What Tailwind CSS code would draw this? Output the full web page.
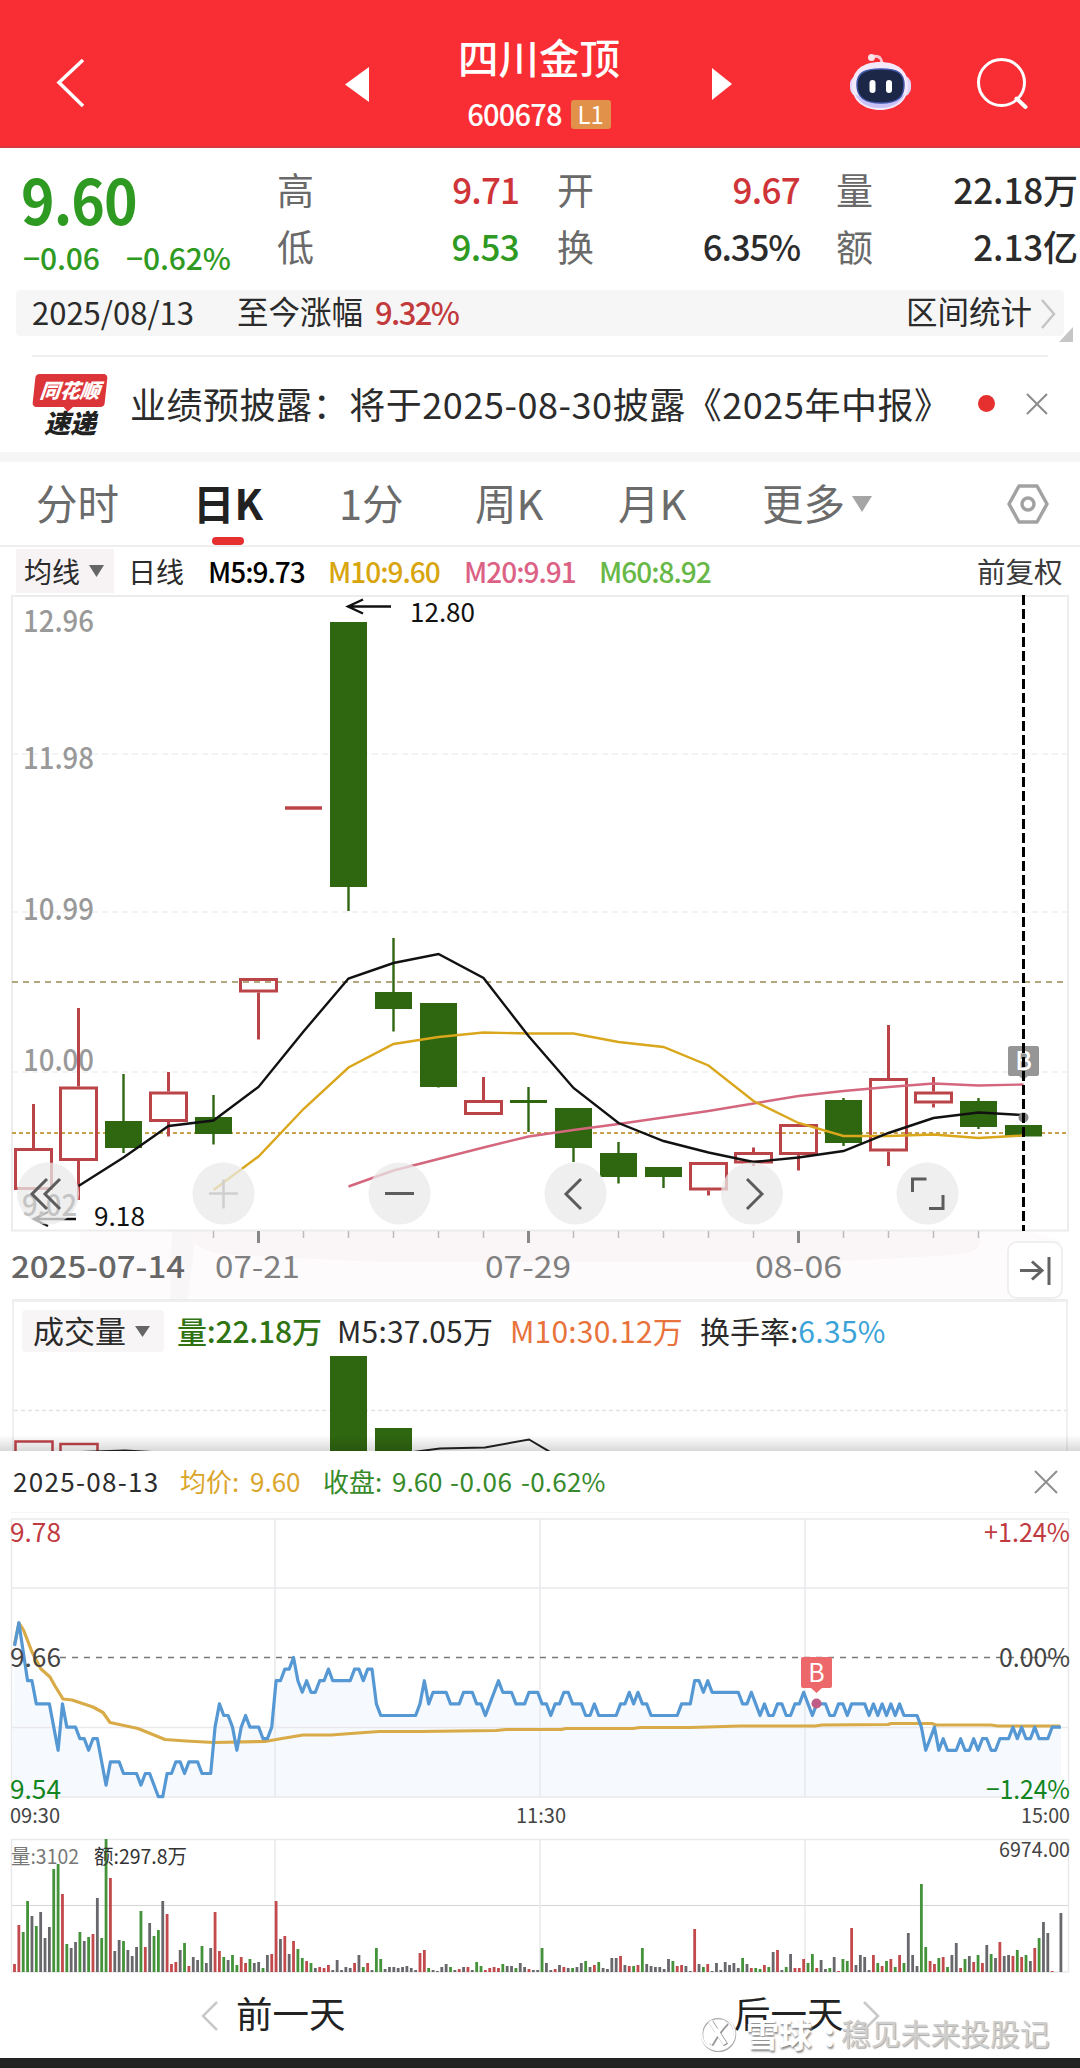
<!DOCTYPE html>
<html lang="zh-CN">
<head>
    <meta charset="UTF-8">
    <meta name="viewport" content="width=device-width, initial-scale=1.0">
    <title>四川金顶 600678</title>
    <script src="https://cdn.jsdelivr.net/npm/@tailwindcss/browser@4"></script>
</head>
<body class="relative w-[1080px] h-[2068px] overflow-hidden bg-white text-[#2b2b2b] font-['Noto_Sans_CJK_SC',sans-serif] leading-none whitespace-nowrap">

    <!-- Header -->
    <header class="h-[148px] bg-[#f92e34] text-white flex border-b-2 border-[#d8373b]">
        <svg class="w-[340px] h-[146px] shrink-0" viewBox="0 0 340 146" fill="none" stroke="#fff" stroke-width="3.5">
            <path d="M83 60 59 82.500 83 106"/>
        </svg>
        <svg class="w-[60px] h-[146px] shrink-0" viewBox="340 0 60 146" fill="#fff"><path d="M369 67v35l-24-17.500z"/></svg>
        <div class="w-[278px] pt-[37px] flex flex-col items-center">
            <h1 class="text-[40.5px] font-medium h-[42px]">四川金顶</h1>
            <div class="mt-[20px] flex items-center gap-[9px]">
                <span class="text-[29px] font-medium tracking-[-0.8px] leading-[32px] -mt-[2px]">600678</span>
                <span class="w-[40px] h-[29px] rounded-[3px] bg-[#e2914a] text-center text-[24px] leading-[27px]">L1</span>
            </div>
        </div>
        <svg class="w-[402px] h-[146px] shrink-0" viewBox="678 0 402 146" fill="none">
            <path d="M712 68v32l20-16z" fill="#fff"/>
            <!-- assistant robot -->
            <path d="M871 57q7-2 9.500 1.500 1.500 2 1 5" stroke="#fbc6d2" stroke-width="2.800" stroke-linecap="round"/>
            <circle cx="871.500" cy="57.500" r="3.500" fill="#ffe3ea"/>
            <rect x="850" y="75" width="61" height="22" rx="9" fill="#dfd6fa"/>
            <path d="M880 62c17 0 28 8 28 24 0 15-12 24-28 24s-28-9-28-24c0-16 11-24 28-24z" fill="#f3e9fb"/>
            <path d="M855 94q25 16 50 0-7 14-25 14t-25-14z" fill="#c9c2f6"/>
            <path d="M881 69c17 0 23 4 23 16s-6 18-23 18-24-6-24-18 7-16 24-16z" fill="#1c2748" stroke="#4056a8" stroke-width="1.500"/>
            <rect x="869.500" y="80" width="6" height="13" rx="3" fill="#fff"/>
            <rect x="886" y="80" width="6" height="13" rx="3" fill="#fff"/>
            <circle cx="1001.500" cy="82.500" r="23" stroke="#fff" stroke-width="3"/>
            <path d="m1016.500 98.500 9 8.500" stroke="#fff" stroke-width="4" stroke-linecap="round"/>
        </svg>
    </header>

    <!-- Quote -->
    <section class="h-[142px] flex text-[35px]">
        <div class="w-[278px] pl-[21px] text-[#2f9a22]">
            <div class="w-[130px] mt-[25px] h-[50px] flex items-center"><span class="text-[62px] font-bold tracking-[-1px] origin-left scale-x-[.92]">9.60</span></div>
            <div class="mt-[19px] ml-[2px] flex text-[30px] font-medium tracking-[-0.1px]"><span class="w-[103px]">−0.06</span><span>−0.62%</span></div>
        </div>
        <div class="grid grid-cols-[242px_281px_279px] gap-x-[38px] w-[802px] pt-[13px] auto-rows-[57px] items-center font-medium">
            <div class="w-[242px] -ml-px flex justify-between"><span class="text-[37px] font-normal text-[#6a6a6a]">高</span><span class="text-[#cf3438] tracking-[-0.9px]">9.71</span></div>
            <div class="w-[243px] -ml-px flex justify-between"><span class="text-[37px] font-normal text-[#6a6a6a]">开</span><span class="text-[#cf3438] tracking-[-0.7px]">9.67</span></div>
            <div class="w-[242px] -ml-[41px] flex justify-between"><span class="text-[37px] font-normal text-[#6a6a6a]">量</span><span class="tracking-[-0.1px]">22.18万</span></div>
            <div class="w-[242px] -ml-px flex justify-between"><span class="text-[37px] font-normal text-[#6a6a6a]">低</span><span class="text-[#2f9a22] tracking-[-0.7px]">9.53</span></div>
            <div class="w-[243px] -ml-px flex justify-between"><span class="text-[37px] font-normal text-[#6a6a6a]">换</span><span class="tracking-[-1.200px]">6.35%</span></div>
            <div class="w-[242px] -ml-[41px] flex justify-between"><span class="text-[37px] font-normal text-[#6a6a6a]">额</span><span class="tracking-[-0.1px]">2.13亿</span></div>
        </div>
    </section>

    <!-- Range summary -->
    <section class="h-[65px] flex items-start">
        <div class="ml-[16px] w-[1048px] h-[46px] bg-[#f6f6f6] rounded flex items-center text-[31.5px] pl-[16px] pb-[4px]">
            <span class="w-[205px] text-[31px]">2025/08/13</span>
            <span class="w-[138px]">至今涨幅</span>
            <span class="text-[#c23a3c] text-[31px] font-medium tracking-[-1.600px]">9.32%</span>
            <span class="ml-auto">区间统计</span>
            <svg class="w-[32px] h-[46px] mt-[4px]" viewBox="0 0 32 46" fill="none"><path d="m10 10 12 14-12 14" stroke="#c4c4c4" stroke-width="2.500"/></svg>
        </div>
        <svg class="w-[16px] h-[54px] -ml-[6px]" viewBox="0 0 16 54"><path d="M15 37v15H1z" fill="#c6c6c6"/></svg>
    </section>

    <!-- News -->
    <section class="mx-[32px] h-[97px] border-t-2 border-[#f0f0f0] flex items-center">
        <div class="w-[76px] h-[63px] italic font-black text-center pt-px">
            <div class="relative w-[72px] h-[33px] ml-[2px] rounded bg-[#dc3539] text-white text-[20px] leading-[31px] -skew-x-6">同花顺<i class="absolute left-[32px] -bottom-[3px] w-[8px] h-[8px] rotate-45 bg-[#dc3539]"></i></div>
            <div class="text-[26px] leading-[30px] text-[#222]">速递</div>
        </div>
        <div class="ml-[22px] w-[849px] -mt-[4px] text-[36px] tracking-[0.550px]">业绩预披露：将于2025-08-30披露《2025年中报》</div>
        <div class="w-[17px] h-[17px] -mt-[3px] rounded-full bg-[#e5302f]"></div>
        <svg class="ml-[31px] -mt-[2px] w-[22px] h-[22px]" viewBox="0 0 22 22" stroke="#8c8c8c" stroke-width="2"><path d="m1 1 20 20M21 1 1 21"/></svg>
    </section>
    <div class="h-[10px] bg-[#f6f6f6]"></div>

    <!-- Period tabs -->
    <nav class="h-[85px] border-b-2 border-[#eee] flex items-center pl-[36px] text-[41.5px] text-[#6b6b6b]">
        <span class="w-[157px] -mt-[2px]">分时</span>
        <span class="w-[146px] h-full relative text-[#222] font-bold leading-[80px]">日K<i class="absolute left-[19px] bottom-0 w-[32px] h-[8px] rounded bg-[#e5302f]"></i></span>
        <span class="w-[136px] -mt-[2px]">1分</span>
        <span class="w-[143px] -mt-[2px]">周K</span>
        <span class="w-[144px] -mt-[2px]">月K</span>
        <span class="w-[83px] -mt-[2px]">更多</span>
        <svg class="ml-[7px] w-[20px] h-[16px]" viewBox="0 0 20 16" fill="#a5a5a5"><path d="M0 0h20L10 16z"/></svg>
        <svg class="ml-[134px] w-[44px] h-[42px]" viewBox="0 0 44 42" fill="none" stroke="#a2a2a2" stroke-width="3.500" stroke-linejoin="round"><path d="M13 3h18l10 18-10 18H13L3 21z"/><circle cx="22" cy="21" r="6"/></svg>
    </nav>

    <!-- Moving averages legend -->
    <div class="h-[48px] flex items-center pl-[16px] text-[28px] font-medium">
        <div class="w-[98px] h-[44px] bg-[#f7f3f5] flex items-center pl-[8px] font-normal">均线
            <svg class="ml-[9px] w-[15px] h-[12px]" viewBox="0 0 15 12" fill="#666"><path d="M0 0h15L7.500 12z"/></svg>
        </div>
        <span class="ml-[14px] w-[80px] font-normal">日线</span>
        <span class="w-[120px] text-black tracking-[-1px]">M5:9.73</span>
        <span class="w-[136px] text-[#d8a50e] tracking-[-1px]">M10:9.60</span>
        <span class="w-[135px] text-[#dc6285] tracking-[-1px]">M20:9.91</span>
        <span class="w-[378px] text-[#68b848] tracking-[-1px]">M60:8.92</span>
        <span class="text-[28.5px] font-normal text-[#3a3a3a]">前复权</span>
    </div>

    <!-- Daily candlestick chart -->
    <svg id="daily" class="block w-[1080px] h-[705px]" viewBox="0 595 1080 705"></svg>

    <!-- Volume -->
    <section class="h-[151px] mx-[12px] border-x-2 border-t-2 border-[#efefef] relative">
        <div class="absolute left-[8px] top-[6px] flex items-center text-[30px]">
            <div class="w-[142px] h-[42px] mt-[2px] bg-[#f7f5f6] rounded flex items-center pl-[11px] pb-[3px] text-[31px]">成交量
                <svg class="ml-[9px] mt-[3px] w-[15px] h-[11px]" viewBox="0 0 15 11" fill="#666"><path d="M0 0h15L7.500 11z"/></svg>
            </div>
            <span class="ml-[13px] w-[160px] font-medium tracking-[-0.2px] text-[#2f7312]">量:22.18万</span>
            <span class="w-[173px] tracking-[0.2px]">M5:37.05万</span>
            <span class="w-[190px] tracking-[0.2px] text-[#e8733c]">M10:30.12万</span>
            <span>换手率:</span><span class="text-[#3ba3d8] tracking-[0.3px]">6.35%</span>
        </div>
        <svg class="absolute left-0 top-[50px] w-[1052px] h-[99px]" viewBox="14 1352 1052 99" fill="none">
            <path d="M14 1410.500h1052" stroke="#e4e4e4" stroke-width="1.500" stroke-dasharray="4 3"/>
            <path d="M330 1356h37v95h-37zM375 1428h37v23h-37z" fill="#2f6610"/>
            <path d="M15.500 1452v-10.500h37V1452M60.500 1452v-8h37V1452" stroke="#c0444a" stroke-width="2.500"/>
            <path d="m80 1452 45-1.500 27 1.500M413 1452l27-3.500 45-1 44-8 22 13" stroke="#222" stroke-width="2"/>
        </svg>
        <div class="absolute -left-[14px] bottom-0 w-[1080px] h-[16px] bg-linear-to-b from-black/0 to-black/15"></div>
    </section>

    <!-- Intraday popup -->
    <section class="h-[607px] bg-white">
        <div class="h-[61px] flex items-center pl-[13px] text-[26px]">
            <span class="w-[167px] -mt-[2px] tracking-[1.300px]">2025-08-13</span>
            <span class="w-[70px] -mt-[2px] text-[#dba52a]">均价:</span>
            <span class="w-[73px] -mt-[2px] text-[#dba52a]">9.60</span>
            <span class="w-[69px] -mt-[2px] text-[#378a2a]">收盘:</span>
            <span class="w-[58px] -mt-[2px] text-[#378a2a]">9.60</span>
            <span class="w-[71px] -mt-[2px] text-[#378a2a] tracking-[0.6px]">-0.06</span>
            <span class="text-[#378a2a] -mt-[2px] tracking-[0.2px]">-0.62%</span>
            <svg class="ml-auto mr-[22px] w-[24px] h-[24px]" viewBox="0 0 24 24" stroke="#8f8f8f" stroke-width="2"><path d="m1 1 22 22M23 1 1 23"/></svg>
        </div>
        <svg id="minute" class="block w-[1080px] h-[463px]" viewBox="0 1512 1080 463"></svg>
        <div class="h-[83px] flex items-center text-[36.5px] text-[#222]">
            <svg class="ml-[200px] -mt-[2px] w-[20px] h-[32px]" viewBox="0 0 20 32" fill="none" stroke="#c9c9c9" stroke-width="2.500"><path d="M17 2 3 16l14 14"/></svg>
            <span class="ml-[16px] w-[498px] -mt-[7px]">前一天</span>
            <span class="-mt-[7px]">后一天</span>
            <svg class="ml-[17px] -mt-[2px] w-[20px] h-[32px]" viewBox="0 0 20 32" fill="none" stroke="#c9c9c9" stroke-width="2.500"><path d="m3 2 14 14L3 30"/></svg>
        </div>
    </section>
    <div class="h-[10px] bg-[#222]"></div>

    <!-- Watermark -->
    <div class="absolute left-[700px] top-[2013px] h-[40px] flex items-center">
        <svg class="w-[38px] h-[38px]" viewBox="0 0 38 38" fill="none">
            <circle cx="18.500" cy="20.500" r="16.500" stroke="#aaa" stroke-width="2.500"/>
            <circle cx="18" cy="19.500" r="16.500" stroke="#fff" stroke-width="2"/>
            <path d="m11 8 15 23M27 9q-8 8-16 22" stroke="#999" stroke-width="5"/>
            <path d="m10 7 15 23M26 8q-8 8-16 22" stroke="#fff" stroke-width="4"/>
        </svg>
        <span class="ml-[8px] w-[72px] text-[33px] font-bold text-white text-shadow-[1px_2px_2px_#888]">雪球</span>
        <span class="w-[23px] text-[33px] font-bold text-white text-center text-shadow-[1px_2px_2px_#888]">:</span>
        <span class="text-[29.8px] text-[#cfcfcf] text-shadow-[1px_1px_1px_#aaa]">稳见未来投股记</span>
    </div>

    <script>
    const GREEN = '#2f6610', RED = '#bb4449';

    function label(x, y, w, size, color, text, extra = '') {
        return `<text x="${x}" y="${y}" textLength="${w}" lengthAdjust="spacingAndGlyphs" font-size="${size}" fill="${color}" ${extra}>${text}</text>`;
    }

    function line(x1, y1, x2, y2, color, width, dash = '') {
        return `<path d="M${x1} ${y1}L${x2} ${y2}" stroke="${color}" stroke-width="${width}" stroke-dasharray="${dash}"/>`;
    }

    // ---- daily chart: [color, high, bodyTop, bodyBottom, low]
    const candles = [
        ['r', 1104, 1148, 1190, 1190], ['r', 1008, 1086.5, 1161, 1200], ['g', 1074, 1121, 1148, 1153],
        ['r', 1072, 1091.5, 1122, 1136.5], ['g', 1095, 1117, 1134, 1144.5], ['r', 978, 978, 992.5, 1039.5],
        ['-', 808, 808, 808, 808], ['g', 622, 622, 887, 911], ['g', 938, 992, 1009, 1031.5],
        ['g', 1003, 1003, 1087, 1087.5], ['r', 1077, 1100, 1115, 1115], ['g', 1087, 1100, 1103, 1132],
        ['g', 1108, 1108, 1148, 1162], ['g', 1142, 1153, 1177, 1183.5], ['g', 1167, 1167, 1177, 1188],
        ['r', 1162, 1162, 1190.5, 1195.5], ['r', 1147.5, 1152, 1163.5, 1166], ['r', 1124, 1124, 1155, 1170.5],
        ['g', 1098, 1100, 1143, 1146], ['r', 1025, 1078, 1151.5, 1166], ['r', 1077, 1091.5, 1103.5, 1107.5],
        ['g', 1098, 1101, 1127, 1129], ['g', 1125, 1125, 1136.5, 1136.5]
    ];
    const ma5 = [1186, 1157.5, 1126, 1120.5, 1087, 1031.5, 978.5, 963, 954, 978, 1036, 1088, 1123, 1141, 1152.5, 1162, 1157.5, 1151, 1133, 1118, 1112.5, 1115];
    const ma10 = [1190, 1156.5, 1109, 1067.5, 1044, 1037, 1032.5, 1033.5, 1033.5, 1042, 1047, 1065.5, 1101, 1123, 1136, 1136, 1134.5, 1138, 1135.5];
    const ma20 = [1186.5, 1170.5, 1159, 1147.5, 1136.5, 1130, 1124, 1117.5, 1111, 1103.5, 1096, 1091, 1087, 1083.5, 1085.5, 1084.5];
    const dayX = i => 33.5 + 45 * i;

    function maLine(values, start, color) {
        const pts = values.map((y, i) => dayX(i + start) + ',' + y).join(' ');
        return `<polyline points="${pts}" fill="none" stroke="${color}" stroke-width="2.400"/>`;
    }

    function drawDaily() {
        let s = '<path d="M80 1231h950l30 10v57H80z" fill="#fefbfc"/>';
        s += '<path d="M190 1231h790v10q0 12-25 14l-130 7H380l-150-7q-40-4-40-24z" fill="#faf6f7"/><path d="M172 1231h24l-8 69h-18z" fill="#f9f6f7"/>';
        s += '<rect x="12" y="596" width="1056" height="634.500" fill="none" stroke="#ececec" stroke-width="2"/>';
        [754, 912, 1072].forEach(y => s += line(12, y, 1068, y, '#efefef', 1.5, '6 4'));
        s += line(12, 1299.5, 1068, 1299.5, '#ececec', 1);
        s += line(12, 982, 1068, 982, '#b3a77e', 1.8, '6 5');
        s += line(12, 1133, 1068, 1133, '#c9a04c', 1.8, '4 3');
        [['12.96', 632], ['11.98', 769], ['10.99', 920], ['10.00', 1071]].forEach(([t, y]) => s += label(23, y, 71, 30, '#999', t, 'font-weight="500"'));

        candles.forEach(([c, high, top, bottom, low], i) => {
            const x = dayX(i), l = x - 18.5;
            if (c === '-') {
                s += line(l, top, l + 37, top, RED, 3.5);
            } else if (c === 'g') {
                s += line(x, high, x, low, GREEN, 2.4) + `<rect x="${l}" y="${top}" width="37" height="${bottom - top}" fill="${GREEN}"/>`;
            } else {
                s += line(x, high, x, top, RED, 3) + line(x, bottom, x, low, RED, 3);
                s += `<rect x="${l + 0.5}" y="${top + 1.5}" width="36" height="${bottom - top - 3}" fill="none" stroke="${RED}" stroke-width="3"/>`;
            }
        });
        s += maLine(ma20, 7, '#d4667e') + maLine(ma10, 4, '#d9a61c') + maLine(ma5, 1, '#111');

        s += '<path d="M391 606.500h-43m15-7-15 7 15 7M76 1219H34m14-7-14 7 14 7" fill="none" stroke="#111" stroke-width="2.400"/>';
        s += label(410, 622, 65, 26, '#111', '12.80') + label(94, 1226, 51, 26, '#111', '9.18');

        // buy marker and crosshair
        s += '<path d="M1011 1046h26q2 0 2 2v26q0 2-2 2h-9l-4.500 4-4.500-4h-8q-3 0-3-2v-26q0-2 3-2z" fill="#969696"/>';
        s += '<text x="1023.500" y="1070" font-size="25" font-weight="500" fill="#fff" text-anchor="middle">B</text>';
        s += '<circle cx="1023.500" cy="1117.500" r="5" fill="#888"/>';
        s += line(1023.5, 595, 1023.5, 1231, '#000', 3, '10 4');

        // floating buttons
        [48, 223.5, 399.5, 575.5, 752, 927.5].forEach(x => s += `<circle cx="${x}" cy="1193.500" r="31" fill="#e9e9e9" opacity=".75"/>`);
        s += label(22, 1216, 55, 30, '#c4c4c4', '9.02', 'font-weight="500"');
        s += '<g fill="none" stroke="#5c5c5c" stroke-width="3"><path d="m47 1179-15 15 15 15m13-30-15 15 15 15M385 1193.500h29M581 1179l-15 15 15 15M747 1179l15 15-15 15M912.500 1192v-13h14M943 1195v13.500h-14"/></g>';
        s += '<path d="M209 1193.500h29m-14.500-14v29" stroke="#cfcfcf" stroke-width="2.500"/>';

        // date axis
        for (let i = 4; i < 22; i++) {
            const big = i === 5 || i === 11 || i === 17;
            s += line(dayX(i), 1231, dayX(i), big ? 1243 : 1238, big ? '#888' : '#bbb', big ? 3 : 1.5);
        }
        s += label(11, 1278, 174, 30, '#666', '2025-07-14', 'font-weight="500"');
        s += label(215, 1278, 85, 30, '#808080', '07-21') + label(485, 1278, 86, 30, '#808080', '07-29') + label(755, 1278, 87, 30, '#808080', '08-06');
        s += '<rect x="1008" y="1242" width="54" height="56" rx="9" fill="#fff" stroke="#f1eef0" stroke-width="2"/>';
        s += '<path d="M1020 1270.500h22m-10-9 10 9-10 9M1049 1257v28" fill="none" stroke="#636363" stroke-width="3"/>';
        document.getElementById('daily').innerHTML = s;
    }

    // ---- intraday: minute, ticks below previous close
    const price = [0,-1, 1,-3, 3,2, 4,2, 5,4, 8,4, 10,8, 11,4, 12,6, 14,6, 15,7, 16,7, 17,8, 18,7, 19,7, 21,11, 22,9, 24,9, 25,10, 28,10, 29,11, 30,10, 31,10,
        33,12, 34,12, 35,10, 36,10, 37,9, 38,9, 39,10, 40,9, 42,9, 43,10, 45,10, 46,6, 47,4, 48,5, 49,5, 50,6, 51,8, 52,6, 53,5, 54,6, 56,6, 57,7, 58,7, 59,6,
        60,2, 61,2, 62,1, 63,1, 64,0, 65,2, 66,3, 67,2, 68,3, 69,3, 70,2, 71,2, 72,1, 73,2, 77,2, 78,1, 79,1, 80,2, 81,1, 82,1, 83,4, 84,5, 92,5, 93,4, 94,2,
        95,4, 96,3, 99,3, 100,4, 102,4, 103,3, 105,3, 106,4, 107,4, 108,5, 109,4, 111,2, 112,3, 114,3, 115,4, 117,4, 118,3, 120,3, 121,4, 122,4, 123,5, 124,4,
        125,4, 126,3, 127,3, 128,4, 130,4, 131,5, 132,5, 133,4, 134,5, 138,5, 139,4, 140,4, 141,3, 142,4, 143,3, 144,4, 145,4, 146,5, 152,5, 153,4, 155,4,
        156,2, 157,2, 158,3, 159,2, 160,3, 166,3, 167,4, 168,4, 169,3, 170,4, 171,5, 172,4, 173,5, 174,5, 175,4, 176,4, 177,5, 178,5, 179,4, 180,4, 181,3,
        182,4, 183,5, 184,4, 186,4, 187,5, 188,5, 189,4, 190,4, 191,5, 192,4, 195,4, 196,5, 197,4, 198,5, 199,4, 200,5, 201,4, 202,5, 203,4, 204,5, 207,5,
        208,6, 209,8, 210,7, 211,6, 212,8, 213,7, 214,8, 216,8, 217,7, 218,8, 219,8, 220,7, 221,8, 222,7, 223,7, 224,8, 225,8, 226,7, 228,7, 229,6, 230,7,
        231,6, 232,7, 233,7, 234,6, 235,7, 237,7, 238,6, 240,6];
    const average = '14.500,1645 19,1623 23.500,1630 32,1652 41,1669 50,1677 55,1686 63,1699 72,1700 93,1707 103,1712.500 110,1722.500 138,1728.500 165,1739.500 186,1741 213.500,1742.500 265,1741.500 282,1738.500 303,1735 331,1735 358,1733 379,1731.500 420,1731.500 496,1730.500 506,1729.500 561,1729.500 566,1728.500 633,1728.500 640,1727.500 691,1727.500 740,1726 815,1726 822,1725 888,1724.500 891,1723.500 932,1723.500 936,1725 991,1725 998,1726 1060,1726';
    // volume bars: r up, g down, k flat, followed by the height
    const volume = ('r8 r47 g40 g71 k56 g46 k60 k34 k45 g103 g108 r78 g28 k24 k30 g40 k31 g35 r38 k74 g34 g133 r94 k21 k32 g31 k22 k16 k25 g61 r25 k49 g36 g42 k71 r58 r8 r10 k22 g29 ' +
        'r6 k15 k12 g26 k9 k24 r60 r21 g15 k12 g17 g7 r15 r9 g13 k9 k10 g4 k17 r18 r71 k33 r36 k18 r31 g23 g14 r11 g9 k4 r5 r4 r7 k2 k12 k2 k5 k4 r9 k17 ' +
        'g5 r9 k2 g24 g13 k3 k5 k5 k4 k5 k6 k4 k2 r19 r22 g4 k2 k1 k5 k8 g5 k2 r3 k5 r5 k2 g10 g6 r2 r4 r5 r4 g8 k6 k6 g4 k9 k5 r3 k2 ' +
        'k2 g24 k9 k2 r3 k7 r5 k4 g4 k5 k9 g11 k5 r7 g10 k4 k3 k14 k14 r16 k7 r6 g6 r7 g24 k8 k6 k5 k5 k3 k13 g11 r6 r7 k6 k1 r43 k8 g5 r8 ' +
        'k1 k9 k2 k10 k7 k9 k4 g14 k8 r4 g4 g3 r7 g5 k20 r22 k2 g5 k18 r4 r4 r13 g9 g18 r4 k12 k3 g4 k15 r1 g13 g11 r44 k7 k17 k15 k2 r17 g9 r6 ' +
        'g11 r13 g5 r17 g9 k39 k17 k6 g88 g25 r11 r8 g14 r15 g5 k17 k29 r4 g13 k16 r10 g17 r9 k27 g18 k14 r30 k16 k17 r16 g22 r15 g17 k11 r24 g34 k50 k39 r1 k0 k59').split(' ');
    const minX = m => 14.5 + 4.36 * m;

    function drawMinute() {
        const grid = '#e9e9ed';
        const pts = [];
        for (let i = 0; i < price.length; i += 2) pts.push(minX(price[i]) + ',' + (1657.5 + 11.6 * price[i + 1]));
        let s = line(11, 1512.5, 1069, 1512.5, '#f6f6f6', 1);
        s += `<polygon points="12,1797 ${pts.join(' ')} 1061,1797" fill="#f6f9fd"/>`;
        [1519, 1588, 1727.5, 1797, 1839.5, 1972].forEach(y => s += line(11, y, 1069, y, grid, 1.5));
        s += line(11, 1905.5, 1069, 1905.5, '#d6d6d6', 1.2);
        [11.5, 275, 540, 805, 1068.500].forEach(x => s += line(x, 1519, x, 1797, grid, 1.5) + line(x, 1839.5, x, 1972, grid, 1.5));
        s += line(60, 1657.5, 1069, 1657.5, '#777', 1.5, '6 6');
        s += `<polyline points="${average}" fill="none" stroke="#d8ab48" stroke-width="3.200" stroke-linejoin="round"/>`;
        s += `<polyline points="${pts.join(' ')}" fill="none" stroke="#5598d4" stroke-width="3.200" stroke-linejoin="round"/>`;
        s += '<path d="M803 1657h27q2 0 2 2v27q0 2-2 2h-8l-5.500 5-5.500-5h-8q-2 0-2-2v-27q0-2 2-2z" fill="#ec686b"/>';
        s += '<text x="816.500" y="1682" font-size="25" fill="#fff" text-anchor="middle">B</text><circle cx="816.500" cy="1703.500" r="5" fill="#bf5d86"/>';

        s += label(10, 1542, 51, 26, '#bf3b41', '9.78') + label(10, 1667, 51, 26, '#444', '9.66') + label(10, 1799, 51, 26, '#128520', '9.54');
        s += label(984, 1542, 86, 26, '#bf3b41', '+1.24%') + label(999, 1667, 71, 26, '#444', '0.00%') + label(986, 1799, 84, 26, '#128520', '−1.24%');
        s += label(10, 1823, 50, 20, '#444', '09:30') + label(516, 1823, 50, 20, '#444', '11:30') + label(1021, 1823, 49, 20, '#444', '15:00');

        const colors = {r: '#c2494c', g: '#44923a', k: '#68686c'};
        volume.forEach((v, m) => {
            const h = Number(v.slice(1));
            s += `<rect x="${minX(m) - 1.4}" y="${1972 - h}" width="2.800" height="${h}" fill="${colors[v[0]]}"/>`;
        });
        s += label(11, 1864, 68, 20, '#777', '量:3102') + label(94, 1864, 93, 20, '#333', '额:297.8万') + label(999, 1857, 71, 20, '#444', '6974.00');
        document.getElementById('minute').innerHTML = s;
    }

    drawDaily();
    drawMinute();
    </script>
</body>
</html>
